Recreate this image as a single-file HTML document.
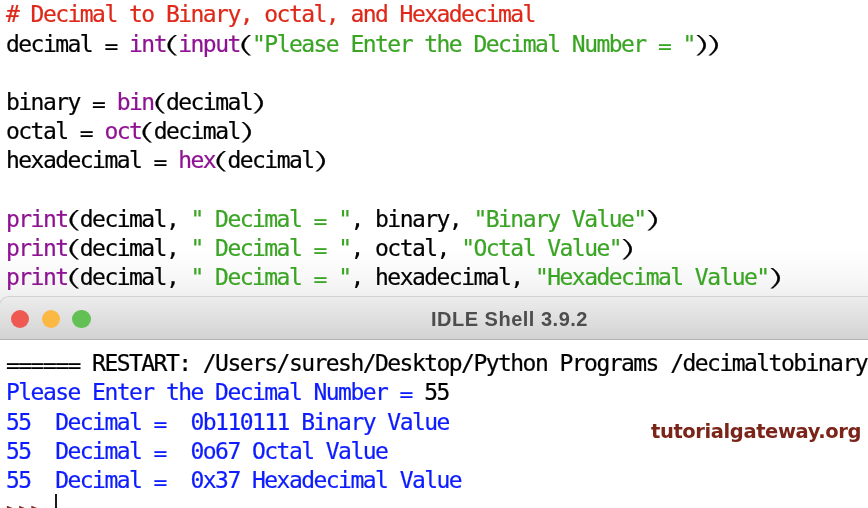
<!DOCTYPE html>
<html><head><meta charset="utf-8">
<style>
html,body{margin:0;padding:0;background:#fff;}
body{width:868px;height:508px;overflow:hidden;position:relative;font-family:"DejaVu Sans Mono","Liberation Mono",monospace;}
.ln,#title,#wm{will-change:transform}
.ln{-webkit-text-stroke:0.22px;position:absolute;left:6.1px;white-space:pre;font-size:23px;line-height:29px;height:29px;letter-spacing:-1.547px;color:#000;}
.ln i{-webkit-text-stroke:0.12px;font-style:normal;display:inline-block;width:12.3px;text-align:center;letter-spacing:0;font-family:'DejaVu Sans Light','DejaVu Sans',sans-serif;font-weight:200;transform:translateY(1px) scaleX(2.3)}
.ln b{font-weight:normal;display:inline-block;transform-origin:50% 14.35px;transform:translateY(1.9px) scaleY(0.82)}
.r{color:#de2819}.p{color:#8e1292}.g{color:#3aa524}.b{color:#0d1cff}.k{color:#7a2a1e}
#sh{position:absolute;left:0;top:249px;width:868px;height:58px;background:linear-gradient(#ffffff 0px,#fcfcfc 12px,#f8f8f8 28px,#f3f3f3 40px,#efefef 47px,#eeeeee 58px)}
#tb{position:absolute;left:-1px;top:296px;width:880px;height:44px;background:linear-gradient(#ececec,#d3d3d3);border-top-left-radius:10px;border:1px solid #d3d3d3;border-bottom:1px solid #b2b2b2;box-sizing:border-box}
.dot{position:absolute;top:12.75px;width:18.5px;height:18.5px;border-radius:50%}
#title{position:absolute;left:431px;top:298px;height:43px;line-height:43px;white-space:pre;font-family:"Liberation Sans",sans-serif;font-weight:bold;font-size:20px;letter-spacing:0.5px;color:#4d4d4d}
#wm{position:absolute;left:651px;top:420px;white-space:pre;font-family:"DejaVu Sans","Liberation Sans",sans-serif;font-weight:bold;font-size:19.5px;line-height:24px;letter-spacing:-0.4px;color:#7b2419}
#cur{position:absolute;left:55.2px;top:494px;width:1.7px;height:16px;background:#1a1a1a}
</style></head><body>
<div id="sh"></div>
<div class="ln" style="top:0px"><span class="r"># Decimal to Binary, octal, and Hexadecimal</span></div>
<div class="ln" style="top:30px">decimal <b>=</b> <span class="p">int</span><i>(</i><span class="p">input</span><i>(</i><span class="g">"Please Enter the Decimal Number <b>=</b> "</span><i>)</i><i>)</i></div>
<div class="ln" style="top:88px">binary <b>=</b> <span class="p">bin</span><i>(</i>decimal<i>)</i></div>
<div class="ln" style="top:117px">octal <b>=</b> <span class="p">oct</span><i>(</i>decimal<i>)</i></div>
<div class="ln" style="top:146px">hexadecimal <b>=</b> <span class="p">hex</span><i>(</i>decimal<i>)</i></div>
<div class="ln" style="top:205px"><span class="p">print</span><i>(</i>decimal, <span class="g">" Decimal <b>=</b> "</span>, binary, <span class="g">"Binary Value"</span><i>)</i></div>
<div class="ln" style="top:234px"><span class="p">print</span><i>(</i>decimal, <span class="g">" Decimal <b>=</b> "</span>, octal, <span class="g">"Octal Value"</span><i>)</i></div>
<div class="ln" style="top:263px"><span class="p">print</span><i>(</i>decimal, <span class="g">" Decimal <b>=</b> "</span>, hexadecimal, <span class="g">"Hexadecimal Value"</span><i>)</i></div>
<div id="tb"><div class="dot" style="left:10.95px;background:#ee5a52"></div><div class="dot" style="left:41.65px;background:#fbb843"></div><div class="dot" style="left:72.25px;background:#62c054"></div></div>
<div id="title">IDLE Shell 3.9.2</div>
<div class="ln" style="top:349px"><b>======</b> RESTART: /Users/suresh/Desktop/Python Programs /decimaltobinary</div>
<div class="ln" style="top:378px"><span class="b">Please Enter the Decimal Number <b>=</b> </span>55</div>
<div class="ln" style="top:408px"><span class="b">55  Decimal <b>=</b>  0b110111 Binary Value</span></div>
<div class="ln" style="top:437px"><span class="b">55  Decimal <b>=</b>  0o67 Octal Value</span></div>
<div class="ln" style="top:466px"><span class="b">55  Decimal <b>=</b>  0x37 Hexadecimal Value</span></div>
<div class="ln" style="top:497px"><span class="k">&gt;&gt;&gt; </span></div>
<div id="cur"></div>
<div id="wm">tutorialgateway.org</div>
</body></html>
